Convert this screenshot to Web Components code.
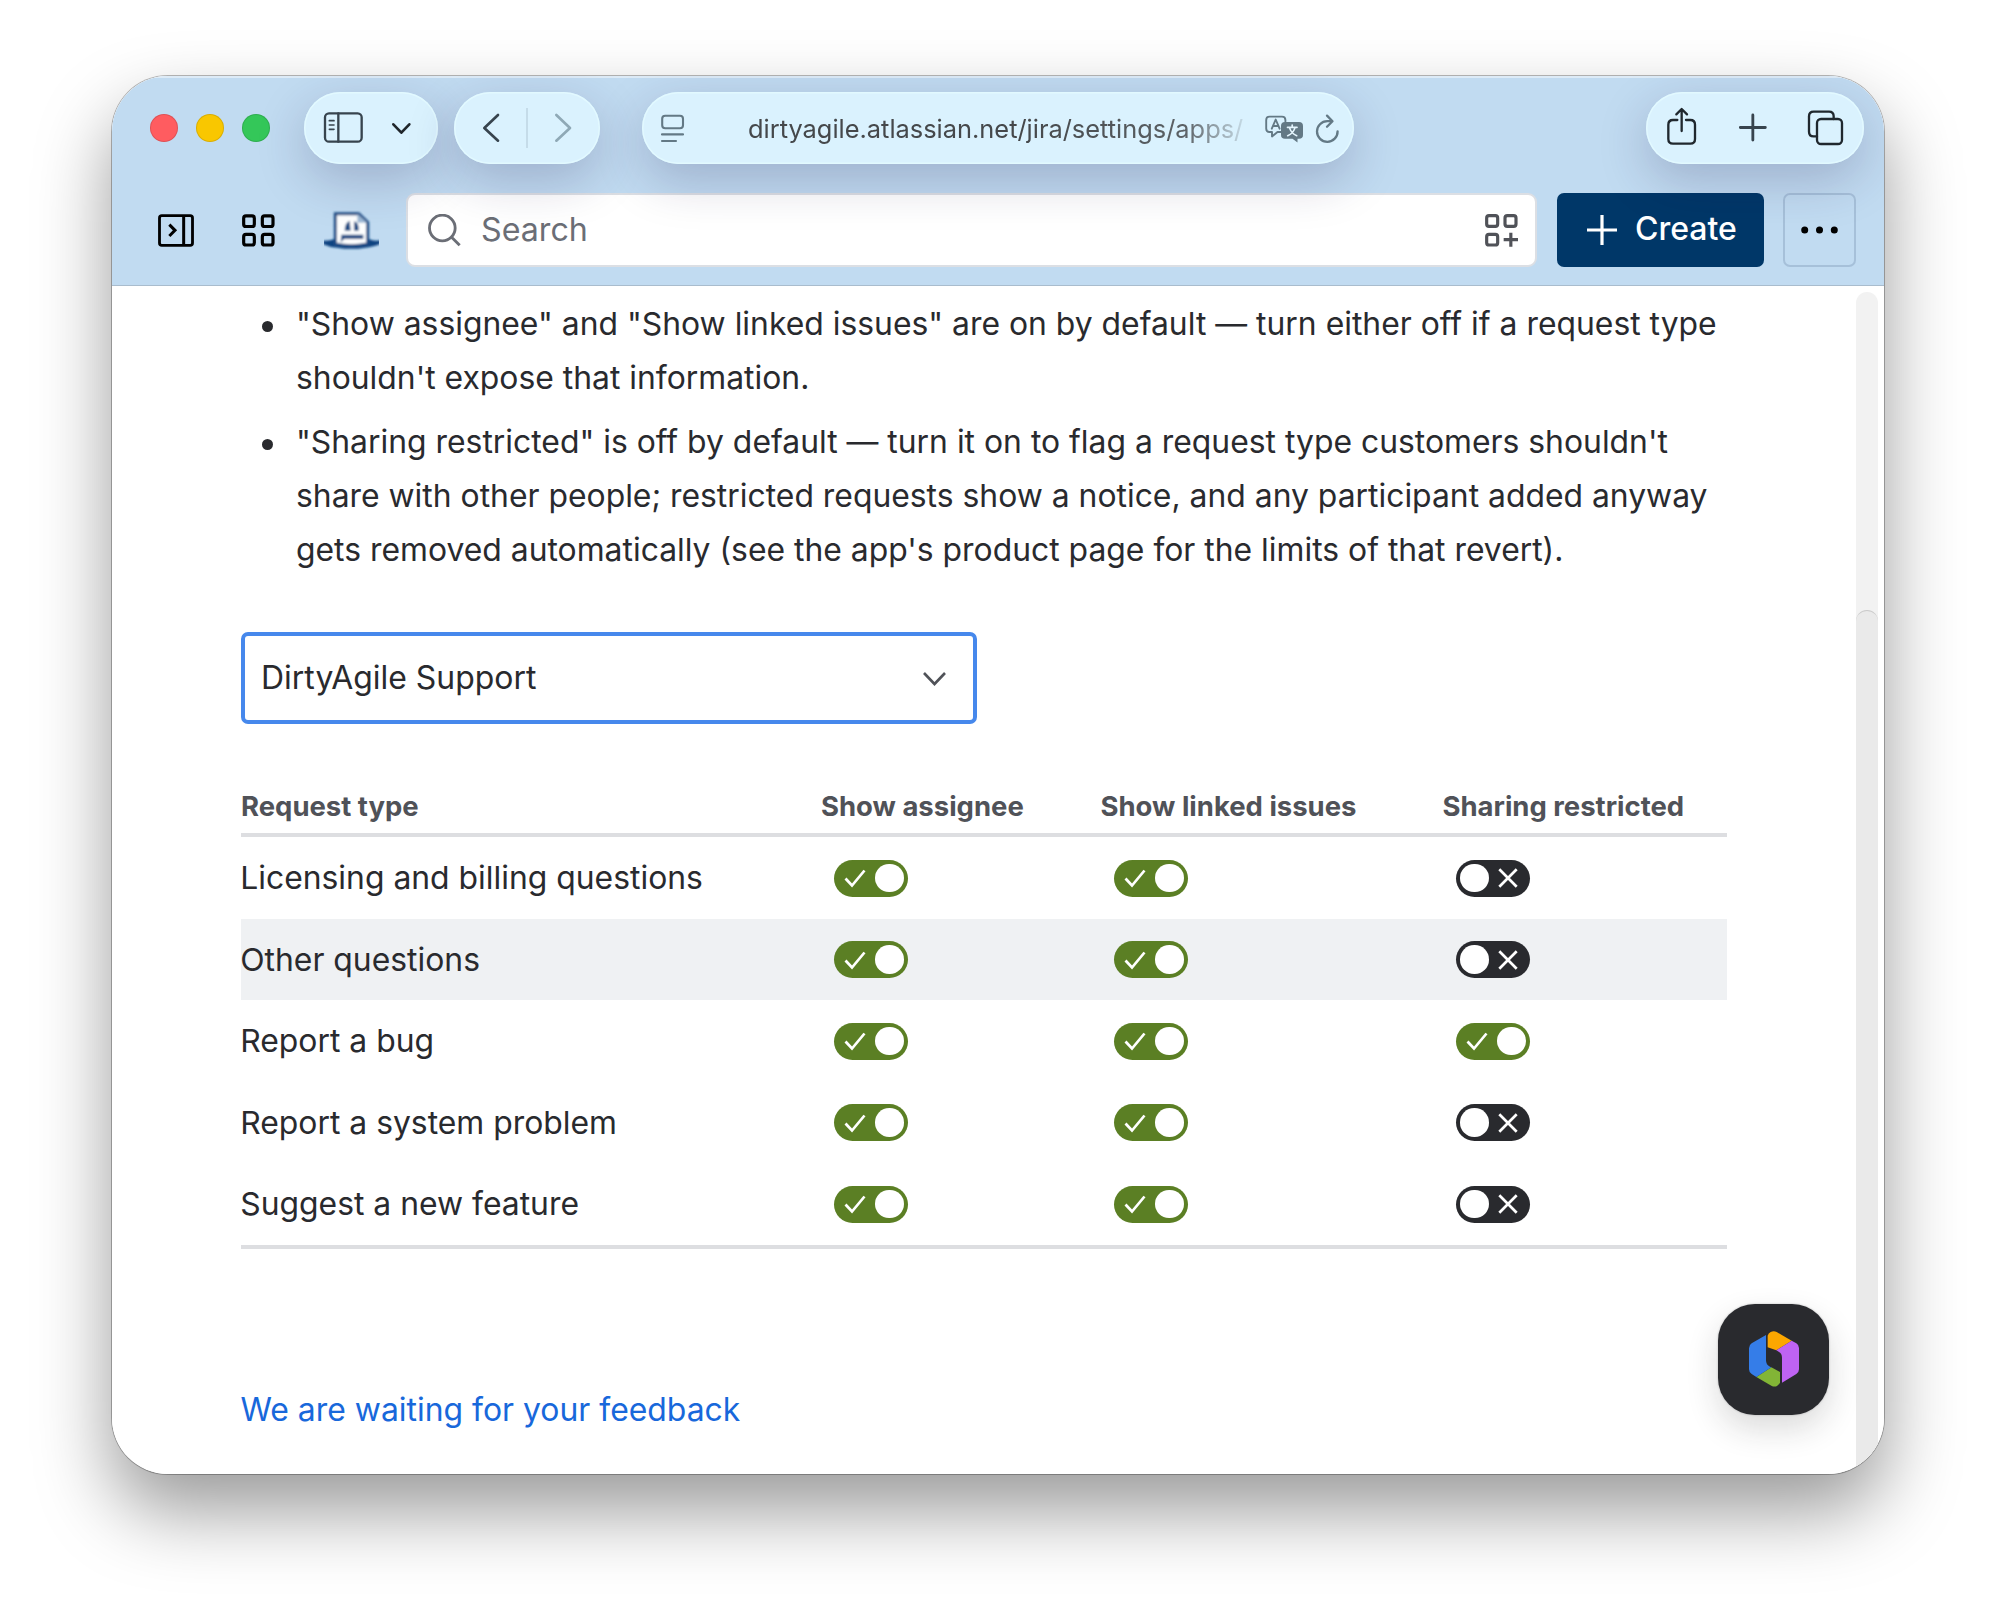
<!DOCTYPE html>
<html lang="en">
<head>
<meta charset="utf-8">
<title>Request types</title>
<style>
html, body { margin: 0; background: #fff; }
body { width: 1996px; height: 1622px; overflow: hidden; font-family: Inter, "Liberation Sans", sans-serif; color: #292a2e; }
</style>
</head>
<body>
<browser-window>
  <browser-toolbar slot="chrome" url="dirtyagile.atlassian.net/jira/settings/apps/"></browser-toolbar>
  <jira-nav slot="chrome"></jira-nav>
  <help-list>
    <help-item>"Show assignee" and "Show linked issues" are on by default — turn either off if a request type<br>shouldn't expose that information.</help-item>
    <help-item>"Sharing restricted" is off by default — turn it on to flag a request type customers shouldn't<br>share with other people; restricted requests show a notice, and any participant added anyway<br>gets removed automatically (see the app's product page for the limits of that revert).</help-item>
  </help-list>
  <project-select>DirtyAgile Support</project-select>
  <request-table>
    <request-row states="on on off">Licensing and billing questions</request-row>
    <request-row states="on on off" hovered>Other questions</request-row>
    <request-row states="on on on">Report a bug</request-row>
    <request-row states="on on off">Report a system problem</request-row>
    <request-row states="on on off">Suggest a new feature</request-row>
  </request-table>
  <feedback-link>We are waiting for your feedback</feedback-link>
  <rovo-button slot="overlay"></rovo-button>
</browser-window>

<script>
const define = (name, html) => customElements.define(name, class extends HTMLElement {
  constructor() {
    super();
    this.attachShadow({ mode: 'open' });
  }
  connectedCallback() {
    this.shadowRoot.innerHTML = typeof html === 'function' ? html(this) : html;
  }
});

define('browser-window', `
<style>
:host { display: block; padding: 76px 112px 0; }
.frame { position: relative; display: flex; flex-direction: column; width: 1772px; height: 1398px; border-radius: 56px;
  box-shadow: 0 0 0 1px rgba(0,0,0,.27), 0 37px 76px rgba(0,0,0,.4); }
.clip { display: flex; flex-direction: column; flex: 1; min-height: 0; overflow: hidden; border-radius: 56px; background: #fff; }
.chrome { flex: none; height: 210px; box-sizing: border-box; background: #c1dbf1; border-bottom: 1.5px solid #a9bccd; box-shadow: inset 0 2px 0 rgba(255,255,255,.45); }
.view { display: flex; flex: 1; min-height: 0; }
.page { flex: 1; padding: 10.5px 0 0 129px; }
.track { width: 22px; margin: 6px 6px 0 0; background: #f2f2f2; border-radius: 11px 11px 0 0; display: flex; }
.thumb { flex: 1; margin: 318px 0 0; background: #eaeaea; border-radius: 11px; border-top: 1px solid #c9c9c9; }
</style>
<div class="frame"><div class="clip">
  <div class="chrome"><slot name="chrome"></slot></div>
  <div class="view"><div class="page"><slot></slot></div><div class="track"><div class="thumb"></div></div></div>
</div><slot name="overlay"></slot></div>`);

define('glass-pill', `
<style>
:host { display: flex; align-items: center; box-sizing: border-box; height: 72px; border-radius: 36px; background: #daf2fe;
  box-shadow: inset 0 0 0 1.5px rgba(226,250,255,.9), 0 16px 50px rgba(30,25,75,.22); }
</style><slot></slot>`);

define('browser-toolbar', host => `
<style>
:host { display: flex; position: relative; z-index: 2; box-sizing: border-box; height: 88px; padding: 16px 20px 0 37.5px; align-items: flex-start; }
svg { display: block; flex: none; fill: none; stroke-linecap: round; stroke-linejoin: round; }
.lights { display: flex; align-items: center; height: 72px; gap: 17.8px; width: 154.5px; }
.lights i { width: 28.4px; height: 28.4px; border-radius: 50%; box-sizing: border-box; border: 1px solid rgba(0,0,0,.12); }
.side { width: 134px; padding-left: 19px; gap: 26px; margin-right: 16px; }
.nav { width: 146px; padding-left: 27px; margin-right: 42px; }
.nav b { width: 1.5px; height: 40px; background: #c5dce9; margin: 0 25px 0 25px; }
.url { width: 712px; padding-left: 18px; }
.addr { width: 497px; margin-left: 62px; font-size: 25.4px; line-height: 31px; color: #45484b; white-space: nowrap; overflow: hidden;
  mask-image: linear-gradient(90deg,#000 55%,rgba(0,0,0,.85) 88%,rgba(0,0,0,.12) 100%); }
.end { width: 218px; margin-left: auto; padding-left: 20px; }
</style>
<div class="lights"><i style="background:#ff5c60"></i><i style="background:#f9c700"></i><i style="background:#34c759"></i></div>
<glass-pill class="side">
  <svg width="41" height="72" viewBox="669 96 123 216" stroke="#37444e" stroke-width="7"><rect x="675" y="160" width="110" height="85" rx="12"/><path d="M715 160V245"/><path stroke-width="5" d="M688 182H702M688 195H702M688 208H702"/></svg>
  <svg width="23" height="72" viewBox="869 96 69 216" stroke="#20262b" stroke-width="8"><path d="M879 193L903 218L927 193"/></svg>
</glass-pill>
<glass-pill class="nav">
  <svg width="20" height="72" viewBox="1143 96 60 216" stroke="#37444e" stroke-width="8"><path d="M1194 165L1153 204L1194 242"/></svg>
  <b></b>
  <svg width="20" height="72" viewBox="1359 96 60 216" stroke="#8fa9b6" stroke-width="8"><path d="M1369 165L1410 204L1369 242"/></svg>
</glass-pill>
<glass-pill class="url">
  <svg width="26" height="72" viewBox="660 92 26 72" stroke="#637985" stroke-width="2.1"><rect x="662.2" y="115.7" width="20.8" height="12.6" rx="3"/><path d="M662 134.400H683M662 141H676"/></svg>
  <div class="addr">${host.getAttribute('url')}</div>
  <svg style="margin-left:19px" width="82" height="72" viewBox="1264 92 82 72" stroke="#637985" stroke-width="1.9">
    <path d="M1281 132H1277.500L1272 136.500V132H1269.500Q1266.200 132 1266.200 128.500V120Q1266.200 116.600 1269.500 116.600H1282Q1285.400 116.600 1285.400 120V121.600"/>
    <path d="M1271.800 128.700L1275.700 119.500L1279.600 128.700M1273 126H1278.400"/>
    <path fill="#637985" stroke="none" d="M1285 122H1299Q1303 122 1303 126V135Q1303 138.800 1299 138.800H1297.500V142.600L1292.500 138.800H1285Q1281 138.800 1281 135V126Q1281 122 1285 122Z"/>
    <path stroke="#e4f5fd" stroke-width="1.7" d="M1287.500 127.300H1297M1292.200 125V127M1295 127.600C1294 131.500 1291.500 134 1287.700 135.700M1289.500 127.600C1290.500 131.500 1293 134 1296.700 135.700"/>
    <path stroke-width="2.300" d="M1331.500 121.200H1327.300A10.300 10.300 0 1 0 1337.600 131.300M1327 115.600L1332.500 121.200L1327 126.800"/>
  </svg>
</glass-pill>
<glass-pill class="end">
  <svg width="31" height="72" viewBox="858 96 93 216" stroke="#20282e" stroke-width="7"><path d="M892 180H879Q865 180 865 194V237Q865 251 879 251H931Q945 251 945 237V194Q945 180 931 180H918M905 213V149M889 163L905 147L921 163"/></svg>
  <svg style="margin-left:41px" width="30" height="72" viewBox="1073 96 90 216" stroke="#37444e" stroke-width="8.500"><path d="M1080 202.500H1155M1117.500 165V240"/></svg>
  <svg style="margin-left:38.500px" width="37" height="72" viewBox="1281 96 111 216" stroke="#20282e" stroke-width="7"><rect x="1311" y="177" width="75" height="75" rx="12"/><path d="M1311 229H1301Q1287 229 1287 215V169Q1287 155 1301 155H1347Q1361 155 1361 169V177"/></svg>
</glass-pill>`);

define('jira-nav', `
<style>
:host { display: flex; box-sizing: border-box; height: 120px; padding: 29px 28px 0 46px; align-items: flex-start; }
svg { display: block; flex: none; fill: none; }
.search { display: flex; align-items: center; box-sizing: border-box; width: 1131px; height: 74px; margin: 0 20px 0 27px; padding: 0 17px 0 20px;
  background: #fff; border: 2px solid #dcdfe4; border-radius: 9px; font-size: 32.2px; line-height: 40px; color: #6b6e76; }
.search span { flex: 1; margin-left: 20px; }
.create { display: flex; align-items: center; box-sizing: border-box; width: 207px; height: 74px; padding-left: 29px; background: #003768; color: #fff; border-radius: 7px;
  font-weight: 540; font-size: 32px; line-height: 40px; }
.create span { margin: -2px 0 0 17px; }
.more { display: flex; align-items: center; justify-content: center; box-sizing: border-box; width: 73px; height: 74px; margin-left: 19px; border: 2px solid rgba(60,85,125,.2); border-radius: 7px; }
</style>
<svg width="36" height="74" viewBox="174 399 108 222" stroke="#000" stroke-width="8.500"><rect x="178.500" y="467" width="99" height="89" rx="7"/><path d="M251 467V556" stroke-width="9"/><path d="M208 494L225 511L208 528" stroke-width="9"/></svg>
<svg style="margin-left:48px" width="33" height="74" viewBox="426 399 99 222" stroke="#000" stroke-width="9.500"><rect x="431" y="467.500" width="32" height="32" rx="7"/><rect x="487" y="467.500" width="32" height="32" rx="7"/><rect x="431" y="523" width="32" height="32" rx="7"/><rect x="487" y="523" width="32" height="32" rx="7"/></svg>
<svg style="margin-left:49px" width="55" height="74" viewBox="672 399 165 222">
  <defs><filter id="soft" x="-10%" y="-10%" width="120%" height="120%"><feGaussianBlur stdDeviation="2.600"/></filter></defs>
  <g filter="url(#soft)">
    <path fill="#0f4280" d="M668 542Q690 543 701 538L808 538Q820 544 841 541V552Q815 562 796 563Q754 570 712 563Q688 562 668 552Z"/>
    <path fill="#fff" stroke="#1c4c84" stroke-width="9" d="M706 461H776L803 487V552Q754 563 706 552Z"/>
    <path fill="#9db8d4" d="M772 461L802 488H772Z"/>
    <path fill="#1c4c84" d="M734 512Q734 488 749 482L752 512ZM762 512V484Q778 488 776 512ZM724 524H790V537H732L722 547Z"/>
  </g></svg>
<div class="search">
  <svg width="33" height="33" viewBox="984 462 99 99" stroke="#6b6e76" stroke-width="8.500"><circle cx="1027" cy="504" r="38.500"/><path d="M1054 531L1079 556"/></svg>
  <span>Search</span>
  <svg width="33" height="33" viewBox="312 462 99 99" stroke="#505258" stroke-width="9.500"><rect x="317" y="467" width="33" height="32" rx="7"/><rect x="372" y="467" width="33" height="32" rx="7"/><rect x="317" y="523" width="33" height="32" rx="7"/><path d="M368 539H411M389.500 518V560"/></svg>
</div>
<div class="create"><svg width="32" height="32" viewBox="0 0 32 32" stroke="#fff" stroke-width="3.200"><path d="M1 16H31M16 1V31"/></svg><span>Create</span></div>
<div class="more"><svg width="37" height="8" viewBox="0 0 37 8" style="fill:#000"><circle cx="3.700" cy="4" r="3.500"/><circle cx="18.500" cy="4" r="3.500"/><circle cx="33.300" cy="4" r="3.500"/></svg></div>`);

define('help-list', `
<style>:host { display: flex; flex-direction: column; gap: 9.800px; padding-left: 20px; font-size: 31.870px; line-height: 54.300px; white-space: nowrap; }</style><slot></slot>`);

define('help-item', `
<style>
:host { display: flex; }
i { flex: none; width: 11px; height: 11px; border-radius: 50%; background: #292a2e; margin: 24.500px 23.500px 0 .5px; }
</style><i></i><div><slot></slot></div>`);

define('project-select', `
<style>
:host { display: flex; align-items: center; justify-content: space-between; box-sizing: border-box; width: 736px; height: 92px; margin-top: 54.200px;
  padding: 0 25.500px 0 16px; border: 4px solid #4688ec; border-radius: 7px; font-size: 31.950px; line-height: 40px; }
svg { display: block; fill: none; }
</style><span><slot></slot></span>
<svg width="27" height="18" viewBox="0 0 27 18" stroke="#505258" stroke-width="2.600"><path d="M3 4L13.500 15L24 4"/></svg>`);

define('request-table', `
<style>
:host { display: block; width: 1486px; margin-top: 60px; border-bottom: 4px solid #dddee1; }
.head { display: grid; grid-template-columns: 580px 279.500px 342px 1fr; box-sizing: border-box; height: 53.500px; padding-top: 5.500px; border-bottom: 4px solid #dddee1;
  font-size: 27.480px; font-weight: 650; line-height: 34px; color: #505258; }
</style>
<div class="head"><span>Request type</span><span>Show assignee</span><span>Show linked issues</span><span>Sharing restricted</span></div>
<slot></slot>`);

define('request-row', host => `
<style>
:host { display: grid; grid-template-columns: 593px 280px 342px 1fr; align-items: center; height: 81.500px; font-size: 31.870px; line-height: 40px; }
:host([hovered]) { background: #eff1f3; }
span { margin-left: -.8px; }
</style><span><slot></slot></span>${host.getAttribute('states').split(' ').map(s => `<toggle-switch state="${s}"></toggle-switch>`).join('')}`);

define('toggle-switch', host => {
  const on = host.getAttribute('state') === 'on';
  return `
<style>
:host { display: flex; flex-direction: ${on ? 'row' : 'row-reverse'}; align-items: center; justify-content: space-between; box-sizing: border-box;
  width: 73.500px; height: 37px; border-radius: 18.500px; padding: ${on ? '0 4px 0 10px' : '0 12px 0 4px'}; background: ${on ? '#5b7f24' : '#292a2e'}; }
i { width: 28.500px; height: 28.500px; border-radius: 50%; background: #fff; }
svg { display: block; fill: none; stroke: #fff; stroke-width: 2.700; }
</style>
${on ? '<svg width="22" height="20" viewBox="0 0 22 20"><path d="M1.500 10.500L8 17.500L20.500 2.500"/></svg>' : '<svg width="20" height="20" viewBox="0 0 20 20"><path d="M1.300 1.300L18.700 18.700M18.700 1.300L1.300 18.700"/></svg>'}<i></i>`;
});

define('feedback-link', `
<style>:host { display: block; margin: 141px 0 0 -.5px; font-size: 31.900px; line-height: 40px; color: #1868db; }</style><slot></slot>`);

define('rovo-button', `
<style>
:host { position: absolute; right: 55px; bottom: 59px; display: flex; align-items: center; justify-content: center; width: 111px; height: 111px; border-radius: 37px;
  background: #292a2e; box-shadow: 0 14px 32px rgba(30,31,33,.16), 0 0 2px rgba(30,31,33,.3); }
svg { display: block; margin-top: -2px; }
</style>
<svg width="50" height="56" viewBox="207 182 150 168">
  <path fill="#fca700" d="M263 231V196Q265 189 272 185Q281 180 290 185L335 211L289 240Z"/>
  <path fill="#bf63f3" d="M335 211L349 219Q357 224 357 233V297Q357 306 349 311L306 337V262Q306 249 296 244L289 240Z"/>
  <path fill="#82b536" d="M229 320L274 291L300 305V336Q298 343 291 347Q283 351 274 346Z"/>
  <path fill="#357de8" d="M258 194V270Q258 284 270 289L274 291L229 320L215 311Q207 306 207 297V234Q207 224 215 219Z"/>
</svg>`);
</script>
</body>
</html>
